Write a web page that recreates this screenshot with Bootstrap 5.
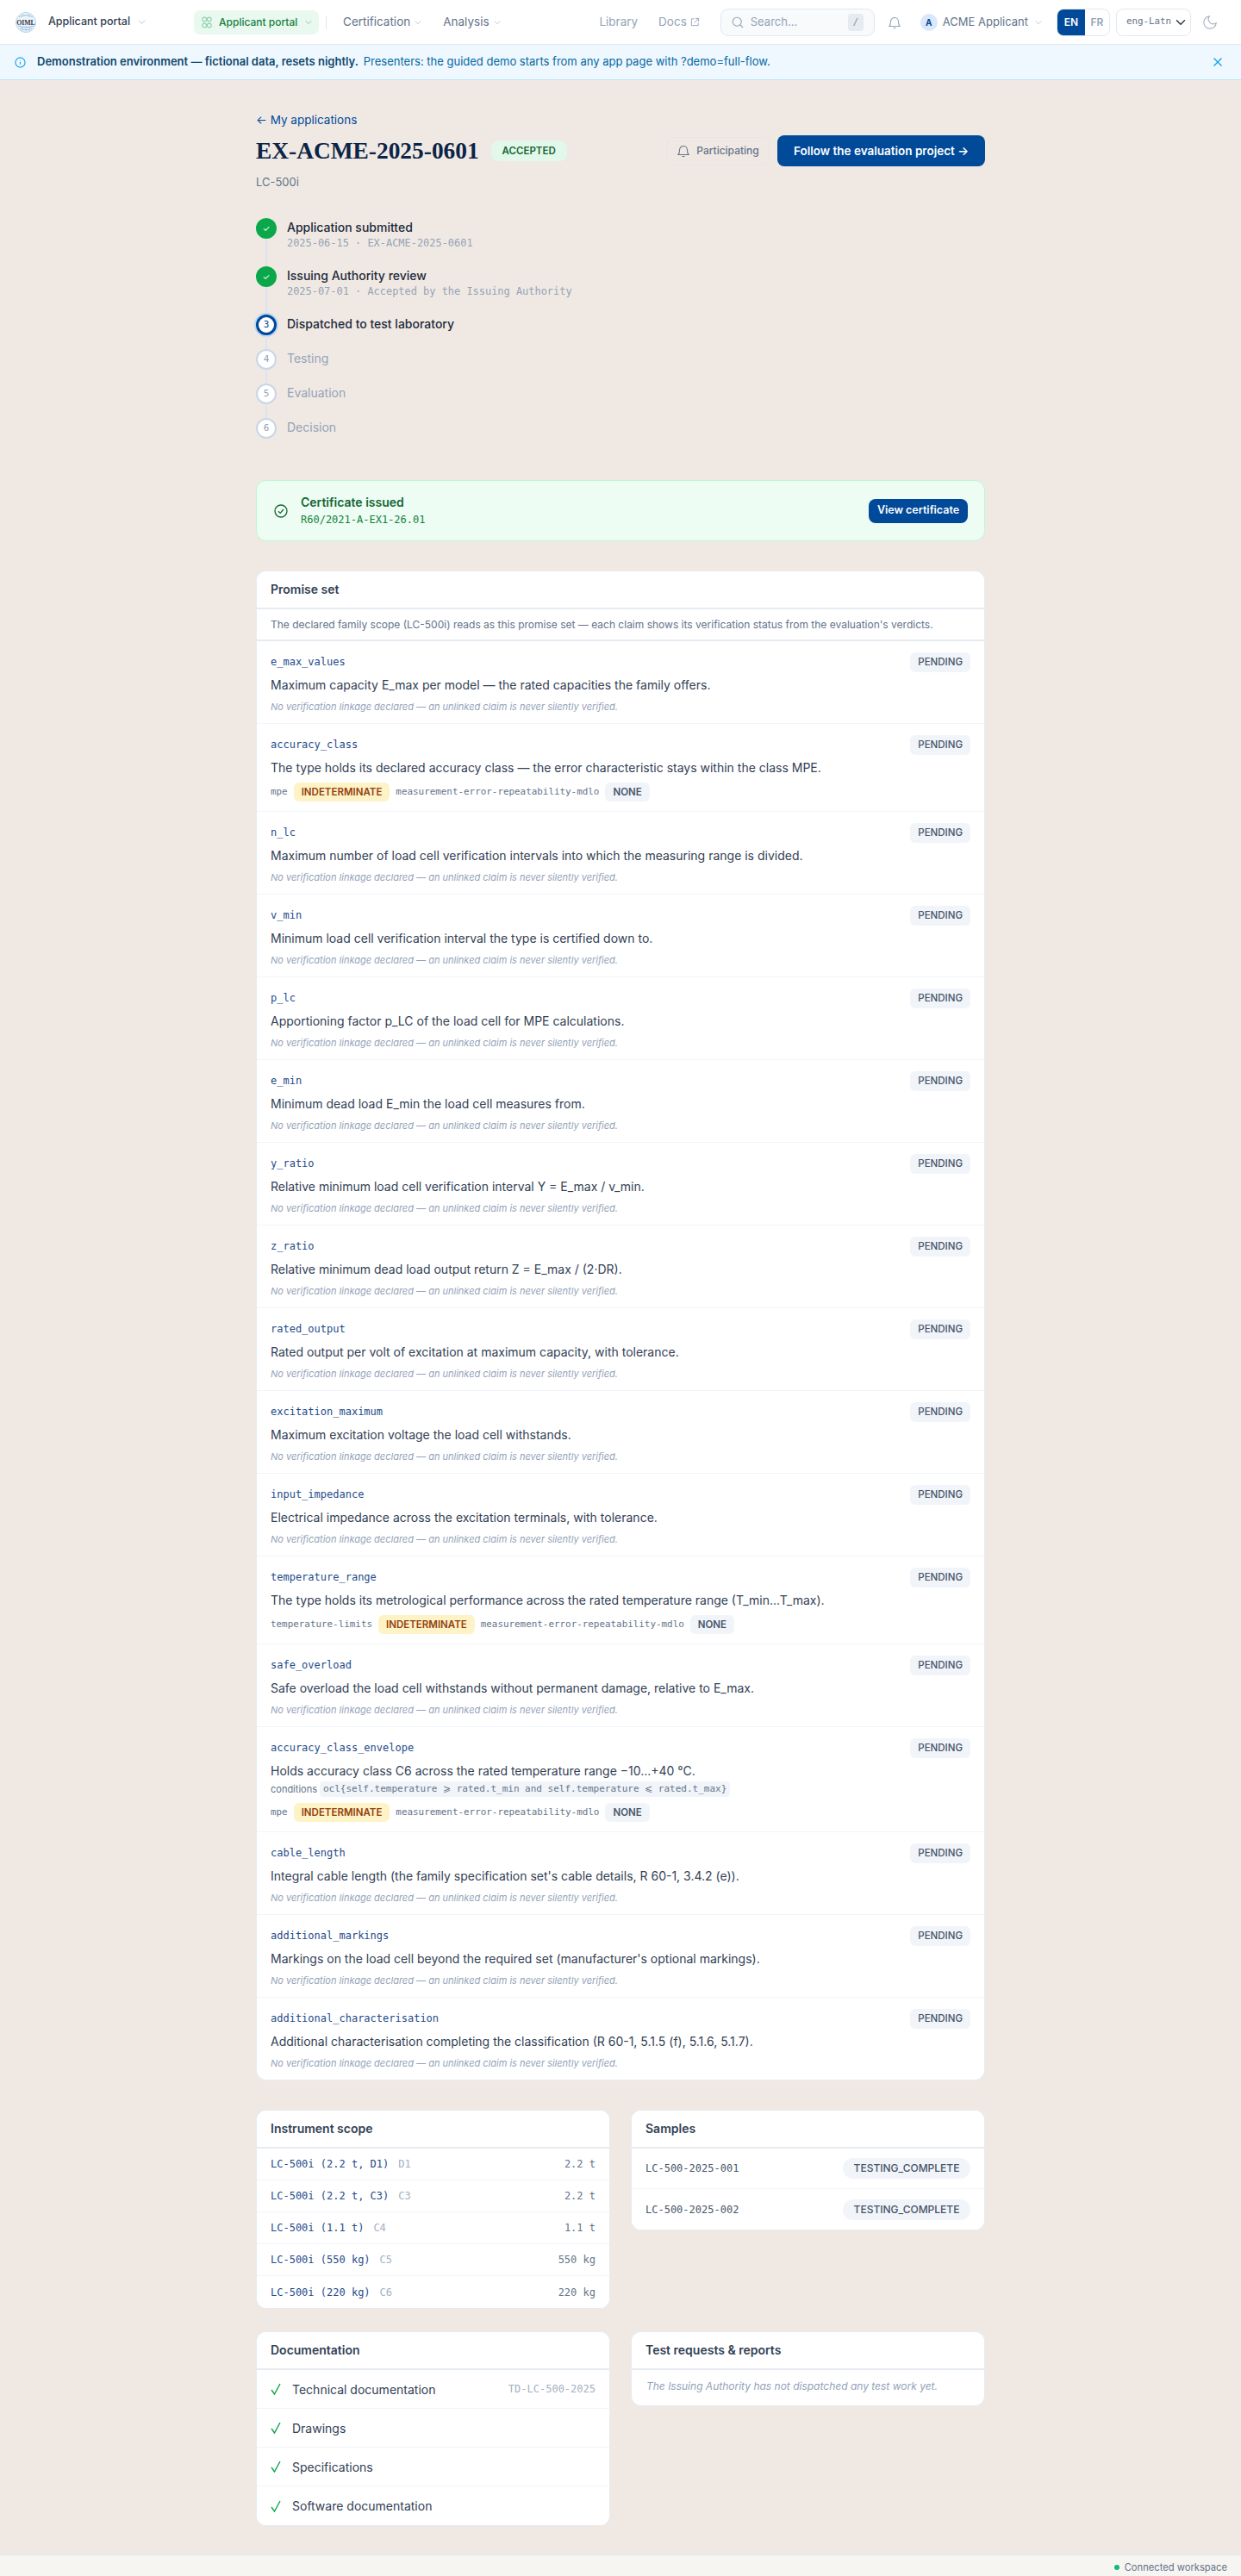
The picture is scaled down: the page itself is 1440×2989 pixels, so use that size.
<!DOCTYPE html>
<html lang="en">
<head>
    <meta charset="UTF-8">
    <meta name="viewport" content="width=device-width, initial-scale=1">
    <title>EX-ACME-2025-0601 - Applicant portal</title>
    <link href="https://cdn.jsdelivr.net/npm/bootstrap@5.3.0/dist/css/bootstrap.min.css" rel="stylesheet">
    <style>
        body {
            font-family: Inter, "Liberation Sans", sans-serif;
            background-color: #f0e9e3;
            color: #1e293b;
            font-size: 14px;
        }
        svg { display: block; flex: none; }
        .mono { font-family: "DejaVu Sans Mono", "Liberation Mono", monospace; }

        /* top bar */
        .top-bar {
            height: 52px;
            background: #fff;
            padding: 0 28px 0 18px;
            border-bottom: 1px solid #e2e8f0;
            flex-wrap: nowrap;
            justify-content: flex-start;
        }
        .brand-name { font-size: 12.5px; font-weight: 500; color: #334155; margin-left: 14px; white-space: nowrap; }
        .caret { color: #b4bfcd; }
        .portal-pill {
            margin-left: 55px;
            height: 28px;
            width: 145px;
            padding: 0 9px;
            border-radius: 7px;
            background: #e9f9f0;
            color: #15803d;
            font-size: 12px;
            font-weight: 500;
            white-space: nowrap;
        }
        .bar-rule { width: 1px; height: 16px; background: #e2e8f0; margin: 0 19px 0 8px; }
        .bar-link { font-size: 13.5px; color: #64748b; text-decoration: none; white-space: nowrap; }
        .bar-link.faded { color: #94a3b8; }
        .search-box {
            width: 179px;
            height: 32px;
            padding: 0 12px;
            border: 1px solid #e2e8f0;
            border-radius: 9px;
            background: #f8fafc;
            color: #94a3b8;
            font-size: 13px;
        }
        .slash-key {
            width: 18px;
            height: 20px;
            border-radius: 4px;
            background: #e6ebf2;
            font-size: 11px;
            text-align: center;
            line-height: 20px;
            color: #8492a6;
        }
        .avatar-dot {
            width: 20px;
            height: 20px;
            margin-left: 23px;
            border-radius: 50%;
            background: #dbe8fb;
            color: #004a99;
            font-size: 10px;
            font-weight: 700;
            line-height: 20px;
            text-align: center;
        }
        .acme-name { font-size: 13px; margin-left: 6px; gap: 7px; }
        .lang-group {
            width: 62px;
            height: 32px;
            border: 1px solid #e2e8f0;
            border-radius: 8px;
            overflow: hidden;
            font-size: 12px;
            font-weight: 600;
            line-height: 30px;
            text-align: center;
        }
        .lang-group span { flex: 1; color: #94a3b8; }
        .lang-group .on { background: #004a99; color: #fff; flex: 0 0 32px; }
        .script-select {
            width: 87px;
            height: 32px;
            margin-left: 7px;
            padding: 0 0 0 11px;
            border: 1px solid #e2e8f0;
            border-radius: 8px;
            font-size: 10.8px;
            color: #64748b;
            background-color: #fff;
            background-position: right 3px center;
        }
        .moon-icon { margin-left: 14px; }

        /* demo banner */
        .demo-banner {
            height: 41px;
            padding: 0 21px 0 17px;
            margin: 0;
            background: #eff7ff;
            border: 0;
            border-bottom: 1px solid #bae6fd;
            border-radius: 0;
            color: #0369a1;
            font-size: 13px;
        }
        .demo-banner strong { color: #0c4a6e; font-weight: 600; margin: 0 6px 0 13px; }

        /* page head */
        .page-wrap { width: 846px; margin: 0 auto; padding: 36px 0 33px; }
        .back-link { display: block; height: 20px; line-height: 20px; font-size: 13.5px; color: #004a99; text-decoration: none; }
        .title-row { height: 36px; margin-top: 8px; }
        .page-title {
            font-family: "Liberation Serif", serif;
            font-weight: 700;
            font-size: 27.4px;
            color: #0b2447;
            margin: 0;
            line-height: 36px;
        }
        .state-accepted {
            margin-left: 14px;
            height: 24px;
            width: 88px;
            line-height: 24px;
            border-radius: 9px;
            background: #e2f8ea;
            color: #166534;
            font-size: 11.5px;
            font-weight: 600;
            text-align: center;
        }
        .follow-off {
            width: 119px;
            height: 33px;
            padding: 0;
            border: 1px solid #e6e6e6;
            border-radius: 8px;
            color: #64748b;
            font-size: 12px;
            font-weight: 500;
        }
        .btn-navy {
            background: #004a99;
            border: 0;
            color: #fff;
            font-weight: 600;
        }
        .btn-navy:hover { background: #003d80; color: #fff; }
        .follow-on { width: 241px; height: 36px; margin-left: 9px; padding: 0; font-size: 13.5px; border-radius: 8px; }
        .model-name { height: 20px; line-height: 20px; margin-top: 8px; font-size: 13px; color: #64748b; }

        /* stepper */
        .step-list { margin: 32px 0; list-style: none; padding: 0; }
        .step-item { position: relative; display: flex; gap: 12px; height: 40px; }
        .step-item.has-sub { height: 56px; }
        .step-item:not(:last-child)::before {
            content: "";
            position: absolute;
            left: 11px;
            top: 24px;
            bottom: 0;
            width: 2px;
            background: #dde4ee;
        }
        .step-dot {
            width: 24px;
            height: 24px;
            flex: none;
            border-radius: 50%;
            border: 2px solid #c9d6e6;
            background: #fff;
            color: #8ea0b8;
            font-size: 11px;
            line-height: 20px;
            text-align: center;
        }
        .step-item.done .step-dot { background: #0aa84a; border-color: #0aa84a; color: #fff; font-size: 10px; }
        .step-item.now .step-dot { border: 3px solid #004a99; line-height: 18px; color: #004a99; box-shadow: 0 0 0 2px #bfd6f4; }
        .step-name { font-size: 14px; font-weight: 500; line-height: 21px; color: #1e293b; }
        .step-item.later .step-name { color: #94a3b8; font-weight: 400; }
        .step-sub { font-size: 11.95px; line-height: 16px; color: #94a3b8; }

        /* certificate */
        .cert-card {
            height: 71px;
            padding: 0 19px 0 20px;
            margin-bottom: 34px;
            background: #edfdf3;
            border: 1px solid #bbf7d0;
            border-radius: 12px;
        }
        .cert-icon { margin-right: 15px; }
        .cert-title { font-size: 14px; font-weight: 600; color: #166534; line-height: 20px; }
        .cert-code { font-size: 12px; color: #15803d; line-height: 17px; margin-top: 2px; }
        .cert-btn { width: 115px; height: 28px; padding: 0; font-size: 12.5px; border-radius: 8px; }

        /* cards */
        .plain-card {
            border: 1px solid #e6ebf2;
            border-radius: 12px;
            overflow: hidden;
        }
        .plain-card .card-header {
            height: 44px;
            padding: 0 16px;
            line-height: 42px;
            background: #fff;
            border-bottom: 2px solid #e6ebf2;
            font-size: 14px;
            font-weight: 600;
            color: #334155;
        }
        .card-intro {
            height: 37px;
            padding: 0 16px;
            line-height: 35px;
            border-bottom: 2px solid #e6ebf2;
            font-size: 12px;
            color: #64748b;
        }
        .claim-row { padding: 13px 16px 11px; border-bottom: 1px solid #f1f4f8; }
        .claim-row:last-child { border-bottom: 0; }
        .claim-key { font-size: 12px; color: #1e4a8a; line-height: 23px; }
        .tag-grey {
            height: 23px;
            padding: 0 9px;
            border-radius: 6px;
            background: #f1f4f9;
            color: #475569;
            font-size: 11.5px;
            font-weight: 500;
            line-height: 23px;
        }
        .claim-text { margin-top: 4px; font-size: 14px; line-height: 21px; color: #334155; }
        .claim-note { margin-top: 7px; font-size: 11px; line-height: 16px; font-style: italic; color: #94a3b8; }
        .link-line { margin-top: 7px; gap: 7px; height: 22px; font-size: 10.9px; color: #64748b; }
        .tag-amber {
            height: 22px;
            padding: 0 9px;
            border-radius: 6px;
            background: #fef3c7;
            color: #92400e;
            font-size: 11.5px;
            font-weight: 600;
            line-height: 22px;
        }
        .link-line .tag-grey { height: 22px; line-height: 22px; font-weight: 600; }
        .cond-line { margin-top: 2px; gap: 3px; height: 18px; font-size: 11px; color: #64748b; }
        .cond-code { height: 18px; line-height: 18px; padding: 0 4px; border-radius: 4px; background: #f1f4f9; }

        .card-pair { margin-top: 34px; --bs-gutter-x: 24px; --bs-gutter-y: 0; }
        .card-pair + .card-pair { margin-top: 26px; }
        .line-row {
            padding: 0 16px;
            border-color: #f1f4f8;
            font-size: 12px;
        }
        .scope-row { height: 37px; }
        .scope-name { color: #1e4a8a; }
        .scope-grade { color: #a3b0c2; margin-left: 11px; }
        .scope-value { color: #64748b; }
        .sample-row { height: 47px; color: #475569; }
        .tag-round {
            height: 24px;
            width: 148px;
            border-radius: 12px;
            background: #f1f4f9;
            color: #475569;
            font-family: Inter, sans-serif;
            font-size: 12px;
            font-weight: 500;
            line-height: 24px;
            text-align: center;
        }
        .doc-row { height: 45px; font-size: 14px; color: #334155; gap: 13px; }
        .doc-ref { margin-left: auto; font-size: 12px; color: #a3b0c2; }
        .empty-note { height: 41px; padding: 0 17px; line-height: 38px; font-size: 12px; font-style: italic; color: #94a3b8; }

        .status-foot {
            height: 29px;
            padding-right: 16px;
            background: #f7f5f2;
            border-top: 1px solid #e2e8f0;
            font-size: 11.2px;
            color: #64748b;
            gap: 6px;
        }
        .live-dot { width: 6px; height: 6px; border-radius: 50%; background: #10b981; }
    </style>
</head>
<body>

<!-- Top bar -->
<nav class="navbar top-bar">
    <svg width="24" height="24" viewBox="0 0 24 24">
        <circle cx="12" cy="12" r="11.500" fill="#eef4f9" stroke="#b9d3e6" stroke-width="1"/>
        <path d="M4 6c4-3 12-3 16 0M3 16c5 2 13 2 18 0M5 19c4 2 10 2 14 0" fill="none" stroke="#8fbcdc" stroke-width="1"/>
        <path d="M8 2v4M16 2v4M8 16v6M12 16v7M16 16v6" stroke="#a8cbe2" stroke-width=".8"/>
        <text x="12" y="14.500" text-anchor="middle" font-family="Liberation Serif" font-weight="700" font-size="7.800" fill="#2b3a4d">OIML</text>
    </svg>
    <span class="brand-name">Applicant portal</span>
    <svg class="caret ms-2" width="11" height="11" viewBox="0 0 12 12" fill="none" stroke="currentColor"><path d="M2 4l4 4 4-4"/></svg>
    <span class="portal-pill d-flex align-items-center gap-2">
        <svg width="12" height="14" viewBox="0 0 12 14" fill="none" stroke="#8fd1ac" stroke-width="1.100">
            <circle cx="3.200" cy="3.500" r="2.400"/><circle cx="8.800" cy="3.500" r="2.400"/><circle cx="3.200" cy="10.500" r="2.400"/><circle cx="8.800" cy="10.500" r="2.400"/>
        </svg>
        Applicant portal
        <svg class="ms-auto" width="10" height="10" viewBox="0 0 12 12" fill="none" stroke="#7cc39b"><path d="M2 4l4 4 4-4"/></svg>
    </span>
    <span class="bar-rule"></span>
    <a class="bar-link d-flex align-items-center gap-1" href="#">Certification
        <svg class="caret" width="10" height="10" viewBox="0 0 12 12" fill="none" stroke="currentColor"><path d="M2 4l4 4 4-4"/></svg></a>
    <a class="bar-link d-flex align-items-center gap-1 ms-4" href="#">Analysis
        <svg class="caret" width="10" height="10" viewBox="0 0 12 12" fill="none" stroke="currentColor"><path d="M2 4l4 4 4-4"/></svg></a>
    <a class="bar-link faded ms-auto" href="#">Library</a>
    <a class="bar-link faded d-flex align-items-center gap-1 ms-4" href="#">Docs
        <svg width="11" height="11" viewBox="0 0 12 12" fill="none" stroke="currentColor"><path d="M5 2H1.500v8.500H10V7M6.500 1.500h4v4M10.500 1.500L5 7"/></svg></a>
    <div class="search-box d-flex align-items-center gap-2 ms-4">
        <svg width="14" height="14" viewBox="0 0 14 14" fill="none" stroke="#94a3b8" stroke-width="1.100"><circle cx="6.200" cy="6.200" r="5"/><path d="M10 10l3 3"/></svg>
        <span>Search...</span>
        <span class="slash-key mono ms-auto">/</span>
    </div>
    <svg class="ms-3" width="14" height="16" viewBox="0 0 14 16" fill="none" stroke="#94a3b8" stroke-width="1.100"><path d="M1 12.500c1.500-1.500 1.500-3 1.500-5.500a4.500 4.500 0 0 1 9 0c0 2.500 0 4 1.500 5.500zM5.500 14.500h3"/></svg>
    <span class="avatar-dot">A</span>
    <span class="bar-link acme-name d-flex align-items-center">ACME Applicant
        <svg class="caret" width="10" height="10" viewBox="0 0 12 12" fill="none" stroke="currentColor"><path d="M2 4l4 4 4-4"/></svg></span>
    <div class="lang-group d-flex ms-3"><span class="on">EN</span><span>FR</span></div>
    <select class="form-select script-select mono"><option>eng-Latn</option></select>
    <svg class="moon-icon" width="16" height="16" viewBox="2 2 20 20" fill="none" stroke="#a3b0c2" stroke-width="1.400"><path d="M21 12.790A9 9 0 1 1 11.210 3 7 7 0 0 0 21 12.790z"/></svg>
</nav>

<!-- Demo banner -->
<div class="alert demo-banner d-flex align-items-center" role="alert">
    <svg width="13" height="13" viewBox="0 0 14 14" fill="none" stroke="#0ea5e9" stroke-width="1.200"><circle cx="7" cy="7" r="6"/><path d="M7 6.500v3M7 4.300v.6"/></svg>
    <strong>Demonstration environment — fictional data, resets nightly.</strong>
    <span>Presenters: the guided demo starts from any app page with ?demo=full-flow.</span>
    <svg class="ms-auto" width="12" height="12" viewBox="0 0 12 12" fill="none" stroke="#0ea5e9" stroke-width="1.400"><path d="M1.500 1.500l9 9M10.500 1.500l-9 9"/></svg>
</div>

<!-- Main -->
<main class="page-wrap">
    <a class="back-link" href="#">← My applications</a>
    <div class="title-row d-flex align-items-center">
        <h1 class="page-title">EX-ACME-2025-0601</h1>
        <span class="state-accepted">ACCEPTED</span>
        <button class="btn follow-off d-flex align-items-center justify-content-center gap-2 ms-auto" type="button">
            <svg width="14" height="16" viewBox="0 0 14 16" fill="none" stroke="#64748b" stroke-width="1.100"><path d="M1 12.500c1.500-1.500 1.500-3 1.500-5.500a4.500 4.500 0 0 1 9 0c0 2.500 0 4 1.500 5.500zM5.500 14.500h3"/></svg>
            Participating
        </button>
        <button class="btn btn-navy follow-on" type="button">Follow the evaluation project →</button>
    </div>
    <div class="model-name">LC-500i</div>

    <ol class="step-list">
        <li class="step-item has-sub done"><span class="step-dot">✓</span><div><div class="step-name">Application submitted</div><div class="step-sub mono">2025-06-15 · EX-ACME-2025-0601</div></div></li>
        <li class="step-item has-sub done"><span class="step-dot">✓</span><div><div class="step-name">Issuing Authority review</div><div class="step-sub mono">2025-07-01 · Accepted by the Issuing Authority</div></div></li>
        <li class="step-item now"><span class="step-dot mono">3</span><div class="step-name">Dispatched to test laboratory</div></li>
        <li class="step-item later"><span class="step-dot mono">4</span><div class="step-name">Testing</div></li>
        <li class="step-item later"><span class="step-dot mono">5</span><div class="step-name">Evaluation</div></li>
        <li class="step-item later"><span class="step-dot mono">6</span><div class="step-name">Decision</div></li>
    </ol>

    <div class="cert-card d-flex align-items-center">
        <svg class="cert-icon" width="16" height="16" viewBox="0 0 16 16" fill="none" stroke="#166534" stroke-width="1.300"><circle cx="8" cy="8" r="7"/><path d="M5 8.200l2.200 2.200L11 6"/></svg>
        <div>
            <div class="cert-title">Certificate issued</div>
            <div class="cert-code mono">R60/2021-A-EX1-26.01</div>
        </div>
        <button class="btn btn-navy cert-btn ms-auto" type="button">View certificate</button>
    </div>

    <!-- Promise set -->
    <div class="card plain-card">
        <div class="card-header">Promise set</div>
        <div class="card-intro">The declared family scope (LC-500i) reads as this promise set — each claim shows its verification status from the evaluation's verdicts.</div>

        <div class="claim-row">
            <div class="d-flex justify-content-between"><span class="claim-key mono">e_max_values</span><span class="tag-grey">PENDING</span></div>
            <div class="claim-text">Maximum capacity E_max per model — the rated capacities the family offers.</div>
            <div class="claim-note">No verification linkage declared — an unlinked claim is never silently verified.</div>
        </div>
        <div class="claim-row">
            <div class="d-flex justify-content-between"><span class="claim-key mono">accuracy_class</span><span class="tag-grey">PENDING</span></div>
            <div class="claim-text">The type holds its declared accuracy class — the error characteristic stays within the class MPE.</div>
            <div class="link-line d-flex align-items-center"><span class="mono">mpe</span><span class="tag-amber">INDETERMINATE</span><span class="mono">measurement-error-repeatability-mdlo</span><span class="tag-grey">NONE</span></div>
        </div>
        <div class="claim-row">
            <div class="d-flex justify-content-between"><span class="claim-key mono">n_lc</span><span class="tag-grey">PENDING</span></div>
            <div class="claim-text">Maximum number of load cell verification intervals into which the measuring range is divided.</div>
            <div class="claim-note">No verification linkage declared — an unlinked claim is never silently verified.</div>
        </div>
        <div class="claim-row">
            <div class="d-flex justify-content-between"><span class="claim-key mono">v_min</span><span class="tag-grey">PENDING</span></div>
            <div class="claim-text">Minimum load cell verification interval the type is certified down to.</div>
            <div class="claim-note">No verification linkage declared — an unlinked claim is never silently verified.</div>
        </div>
        <div class="claim-row">
            <div class="d-flex justify-content-between"><span class="claim-key mono">p_lc</span><span class="tag-grey">PENDING</span></div>
            <div class="claim-text">Apportioning factor p_LC of the load cell for MPE calculations.</div>
            <div class="claim-note">No verification linkage declared — an unlinked claim is never silently verified.</div>
        </div>
        <div class="claim-row">
            <div class="d-flex justify-content-between"><span class="claim-key mono">e_min</span><span class="tag-grey">PENDING</span></div>
            <div class="claim-text">Minimum dead load E_min the load cell measures from.</div>
            <div class="claim-note">No verification linkage declared — an unlinked claim is never silently verified.</div>
        </div>
        <div class="claim-row">
            <div class="d-flex justify-content-between"><span class="claim-key mono">y_ratio</span><span class="tag-grey">PENDING</span></div>
            <div class="claim-text">Relative minimum load cell verification interval Y = E_max / v_min.</div>
            <div class="claim-note">No verification linkage declared — an unlinked claim is never silently verified.</div>
        </div>
        <div class="claim-row">
            <div class="d-flex justify-content-between"><span class="claim-key mono">z_ratio</span><span class="tag-grey">PENDING</span></div>
            <div class="claim-text">Relative minimum dead load output return Z = E_max / (2·DR).</div>
            <div class="claim-note">No verification linkage declared — an unlinked claim is never silently verified.</div>
        </div>
        <div class="claim-row">
            <div class="d-flex justify-content-between"><span class="claim-key mono">rated_output</span><span class="tag-grey">PENDING</span></div>
            <div class="claim-text">Rated output per volt of excitation at maximum capacity, with tolerance.</div>
            <div class="claim-note">No verification linkage declared — an unlinked claim is never silently verified.</div>
        </div>
        <div class="claim-row">
            <div class="d-flex justify-content-between"><span class="claim-key mono">excitation_maximum</span><span class="tag-grey">PENDING</span></div>
            <div class="claim-text">Maximum excitation voltage the load cell withstands.</div>
            <div class="claim-note">No verification linkage declared — an unlinked claim is never silently verified.</div>
        </div>
        <div class="claim-row">
            <div class="d-flex justify-content-between"><span class="claim-key mono">input_impedance</span><span class="tag-grey">PENDING</span></div>
            <div class="claim-text">Electrical impedance across the excitation terminals, with tolerance.</div>
            <div class="claim-note">No verification linkage declared — an unlinked claim is never silently verified.</div>
        </div>
        <div class="claim-row">
            <div class="d-flex justify-content-between"><span class="claim-key mono">temperature_range</span><span class="tag-grey">PENDING</span></div>
            <div class="claim-text">The type holds its metrological performance across the rated temperature range (T_min...T_max).</div>
            <div class="link-line d-flex align-items-center"><span class="mono">temperature-limits</span><span class="tag-amber">INDETERMINATE</span><span class="mono">measurement-error-repeatability-mdlo</span><span class="tag-grey">NONE</span></div>
        </div>
        <div class="claim-row">
            <div class="d-flex justify-content-between"><span class="claim-key mono">safe_overload</span><span class="tag-grey">PENDING</span></div>
            <div class="claim-text">Safe overload the load cell withstands without permanent damage, relative to E_max.</div>
            <div class="claim-note">No verification linkage declared — an unlinked claim is never silently verified.</div>
        </div>
        <div class="claim-row">
            <div class="d-flex justify-content-between"><span class="claim-key mono">accuracy_class_envelope</span><span class="tag-grey">PENDING</span></div>
            <div class="claim-text">Holds accuracy class C6 across the rated temperature range −10...+40 °C.</div>
            <div class="cond-line d-flex align-items-center"><span>conditions</span><span class="cond-code mono">ocl{self.temperature ⩾ rated.t_min and self.temperature ⩽ rated.t_max}</span></div>
            <div class="link-line d-flex align-items-center"><span class="mono">mpe</span><span class="tag-amber">INDETERMINATE</span><span class="mono">measurement-error-repeatability-mdlo</span><span class="tag-grey">NONE</span></div>
        </div>
        <div class="claim-row">
            <div class="d-flex justify-content-between"><span class="claim-key mono">cable_length</span><span class="tag-grey">PENDING</span></div>
            <div class="claim-text">Integral cable length (the family specification set's cable details, R 60-1, 3.4.2 (e)).</div>
            <div class="claim-note">No verification linkage declared — an unlinked claim is never silently verified.</div>
        </div>
        <div class="claim-row">
            <div class="d-flex justify-content-between"><span class="claim-key mono">additional_markings</span><span class="tag-grey">PENDING</span></div>
            <div class="claim-text">Markings on the load cell beyond the required set (manufacturer's optional markings).</div>
            <div class="claim-note">No verification linkage declared — an unlinked claim is never silently verified.</div>
        </div>
        <div class="claim-row">
            <div class="d-flex justify-content-between"><span class="claim-key mono">additional_characterisation</span><span class="tag-grey">PENDING</span></div>
            <div class="claim-text">Additional characterisation completing the classification (R 60-1, 5.1.5 (f), 5.1.6, 5.1.7).</div>
            <div class="claim-note">No verification linkage declared — an unlinked claim is never silently verified.</div>
        </div>
    </div>

    <!-- Scope and samples -->
    <div class="row card-pair align-items-start">
        <div class="col-6">
            <div class="card plain-card">
                <div class="card-header">Instrument scope</div>
                <ul class="list-group list-group-flush">
                    <li class="list-group-item line-row scope-row d-flex align-items-center mono"><span class="scope-name">LC-500i (2.2 t, D1)</span><span class="scope-grade">D1</span><span class="scope-value ms-auto">2.2 t</span></li>
                    <li class="list-group-item line-row scope-row d-flex align-items-center mono"><span class="scope-name">LC-500i (2.2 t, C3)</span><span class="scope-grade">C3</span><span class="scope-value ms-auto">2.2 t</span></li>
                    <li class="list-group-item line-row scope-row d-flex align-items-center mono"><span class="scope-name">LC-500i (1.1 t)</span><span class="scope-grade">C4</span><span class="scope-value ms-auto">1.1 t</span></li>
                    <li class="list-group-item line-row scope-row d-flex align-items-center mono"><span class="scope-name">LC-500i (550 kg)</span><span class="scope-grade">C5</span><span class="scope-value ms-auto">550 kg</span></li>
                    <li class="list-group-item line-row scope-row d-flex align-items-center mono"><span class="scope-name">LC-500i (220 kg)</span><span class="scope-grade">C6</span><span class="scope-value ms-auto">220 kg</span></li>
                </ul>
            </div>
        </div>
        <div class="col-6">
            <div class="card plain-card">
                <div class="card-header">Samples</div>
                <ul class="list-group list-group-flush">
                    <li class="list-group-item line-row sample-row d-flex align-items-center justify-content-between mono"><span>LC-500-2025-001</span><span class="tag-round">TESTING_COMPLETE</span></li>
                    <li class="list-group-item line-row sample-row d-flex align-items-center justify-content-between mono"><span>LC-500-2025-002</span><span class="tag-round">TESTING_COMPLETE</span></li>
                </ul>
            </div>
        </div>
    </div>

    <!-- Documentation and reports -->
    <div class="row card-pair align-items-start">
        <div class="col-6">
            <div class="card plain-card">
                <div class="card-header">Documentation</div>
                <ul class="list-group list-group-flush">
                    <li class="list-group-item line-row doc-row d-flex align-items-center">
                        <svg width="12" height="14" viewBox="0 0 12 14" fill="none" stroke="#0aa84a" stroke-width="1.400"><path d="M1 8l3.500 5L11 1"/></svg>
                        <span>Technical documentation</span><span class="doc-ref mono">TD-LC-500-2025</span>
                    </li>
                    <li class="list-group-item line-row doc-row d-flex align-items-center">
                        <svg width="12" height="14" viewBox="0 0 12 14" fill="none" stroke="#0aa84a" stroke-width="1.400"><path d="M1 8l3.500 5L11 1"/></svg>
                        <span>Drawings</span>
                    </li>
                    <li class="list-group-item line-row doc-row d-flex align-items-center">
                        <svg width="12" height="14" viewBox="0 0 12 14" fill="none" stroke="#0aa84a" stroke-width="1.400"><path d="M1 8l3.500 5L11 1"/></svg>
                        <span>Specifications</span>
                    </li>
                    <li class="list-group-item line-row doc-row d-flex align-items-center">
                        <svg width="12" height="14" viewBox="0 0 12 14" fill="none" stroke="#0aa84a" stroke-width="1.400"><path d="M1 8l3.500 5L11 1"/></svg>
                        <span>Software documentation</span>
                    </li>
                </ul>
            </div>
        </div>
        <div class="col-6">
            <div class="card plain-card">
                <div class="card-header">Test requests &amp; reports</div>
                <div class="empty-note">The Issuing Authority has not dispatched any test work yet.</div>
            </div>
        </div>
    </div>
</main>

<!-- Status bar -->
<footer class="status-foot d-flex align-items-center justify-content-end">
    <span class="live-dot"></span>
    <span>Connected workspace</span>
</footer>

<script src="https://cdn.jsdelivr.net/npm/bootstrap@5.3.0/dist/js/bootstrap.bundle.min.js"></script>
</body>
</html>
